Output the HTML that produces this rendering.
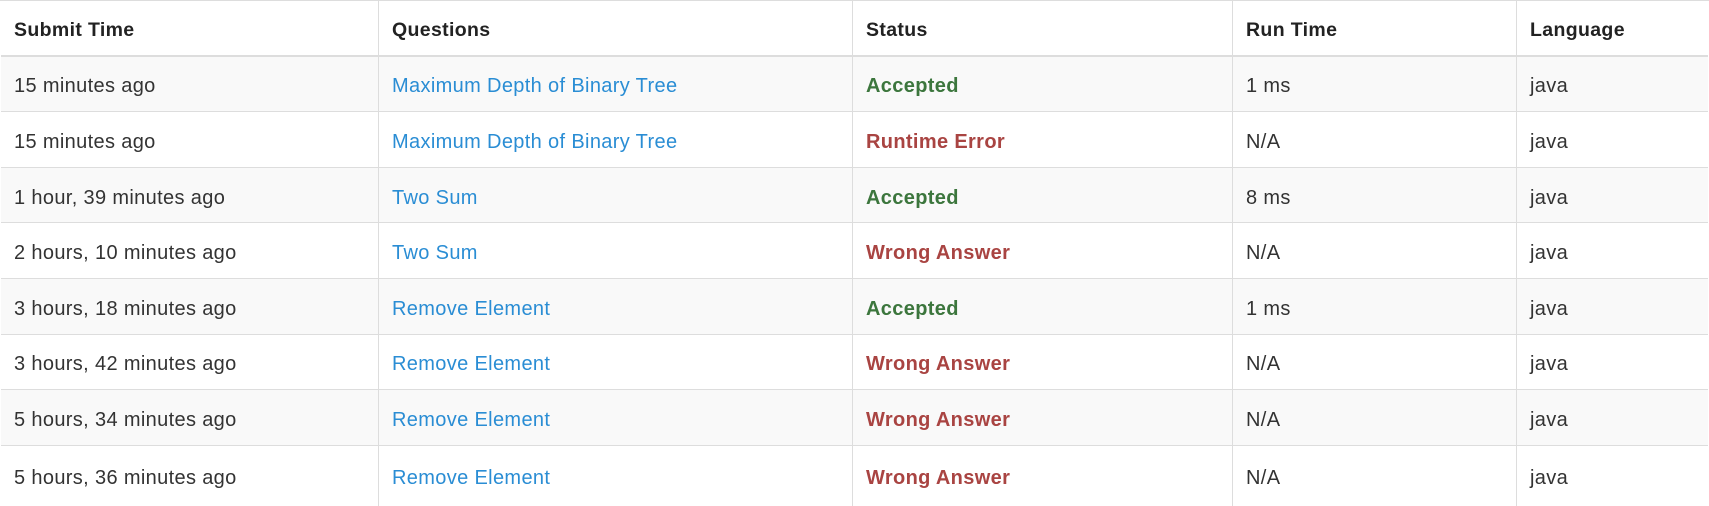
<!DOCTYPE html>
<html><head><meta charset="utf-8"><style>
html,body{margin:0;padding:0;background:#fff;width:1709px;height:495px;overflow:hidden;font-family:"Liberation Sans",Arial,sans-serif;font-size:20px;letter-spacing:0.35px;color:#333}
.t{position:absolute;left:0;top:0;width:1707px;border-left:1px solid #ddd;border-right:1px solid #ddd;border-top:1px solid #ddd}
.r{position:absolute;left:0;width:1707px;height:55.6px;border-bottom:1px solid #ddd;box-sizing:border-box}
.r.s{background:#f9f9f9}
.r.h{font-weight:bold;border-bottom:2px solid #ddd;color:#222;font-size:19.5px}
.c{position:absolute;top:0;height:55.6px;display:flex;align-items:center;padding-left:13px;padding-top:5px;box-sizing:border-box;border-left:1px solid #ddd;white-space:nowrap}
.r.h .c{padding-top:3px}
.c1{left:0;border-left:none}.c2{left:377px}.c3{left:851px}.c4{left:1231px}.c5{left:1515px}
.last{height:60px;border-bottom:none}.last .c{height:60px;align-items:flex-start;padding-top:0}
.last .c span{line-height:55.6px;padding-top:5px;display:block}
a{color:#2a8dd4;text-decoration:none}
.ok{color:#3c763d;font-weight:bold}.er{color:#a94442;font-weight:bold}
</style></head><body>
<div class="t">
<div class="r h" style="top:0"><div class="c c1">Submit Time</div><div class="c c2">Questions</div><div class="c c3">Status</div><div class="c c4">Run Time</div><div class="c c5">Language</div></div>
<div class="r s" style="top:55.6px"><div class="c c1">15 minutes ago</div><div class="c c2"><a>Maximum Depth of Binary Tree</a></div><div class="c c3 ok">Accepted</div><div class="c c4">1 ms</div><div class="c c5">java</div></div>
<div class="r" style="top:111.2px"><div class="c c1">15 minutes ago</div><div class="c c2"><a>Maximum Depth of Binary Tree</a></div><div class="c c3 er">Runtime Error</div><div class="c c4">N/A</div><div class="c c5">java</div></div>
<div class="r s" style="top:166.8px"><div class="c c1">1 hour, 39 minutes ago</div><div class="c c2"><a>Two Sum</a></div><div class="c c3 ok">Accepted</div><div class="c c4">8 ms</div><div class="c c5">java</div></div>
<div class="r" style="top:222.4px"><div class="c c1">2 hours, 10 minutes ago</div><div class="c c2"><a>Two Sum</a></div><div class="c c3 er">Wrong Answer</div><div class="c c4">N/A</div><div class="c c5">java</div></div>
<div class="r s" style="top:278px"><div class="c c1">3 hours, 18 minutes ago</div><div class="c c2"><a>Remove Element</a></div><div class="c c3 ok">Accepted</div><div class="c c4">1 ms</div><div class="c c5">java</div></div>
<div class="r" style="top:333.6px"><div class="c c1">3 hours, 42 minutes ago</div><div class="c c2"><a>Remove Element</a></div><div class="c c3 er">Wrong Answer</div><div class="c c4">N/A</div><div class="c c5">java</div></div>
<div class="r s" style="top:389.2px"><div class="c c1">5 hours, 34 minutes ago</div><div class="c c2"><a>Remove Element</a></div><div class="c c3 er">Wrong Answer</div><div class="c c4">N/A</div><div class="c c5">java</div></div>
<div class="r last" style="top:444.8px"><div class="c c1"><span>5 hours, 36 minutes ago</span></div><div class="c c2"><span><a>Remove Element</a></span></div><div class="c c3 er"><span>Wrong Answer</span></div><div class="c c4"><span>N/A</span></div><div class="c c5"><span>java</span></div></div>
</div>
</body></html>
